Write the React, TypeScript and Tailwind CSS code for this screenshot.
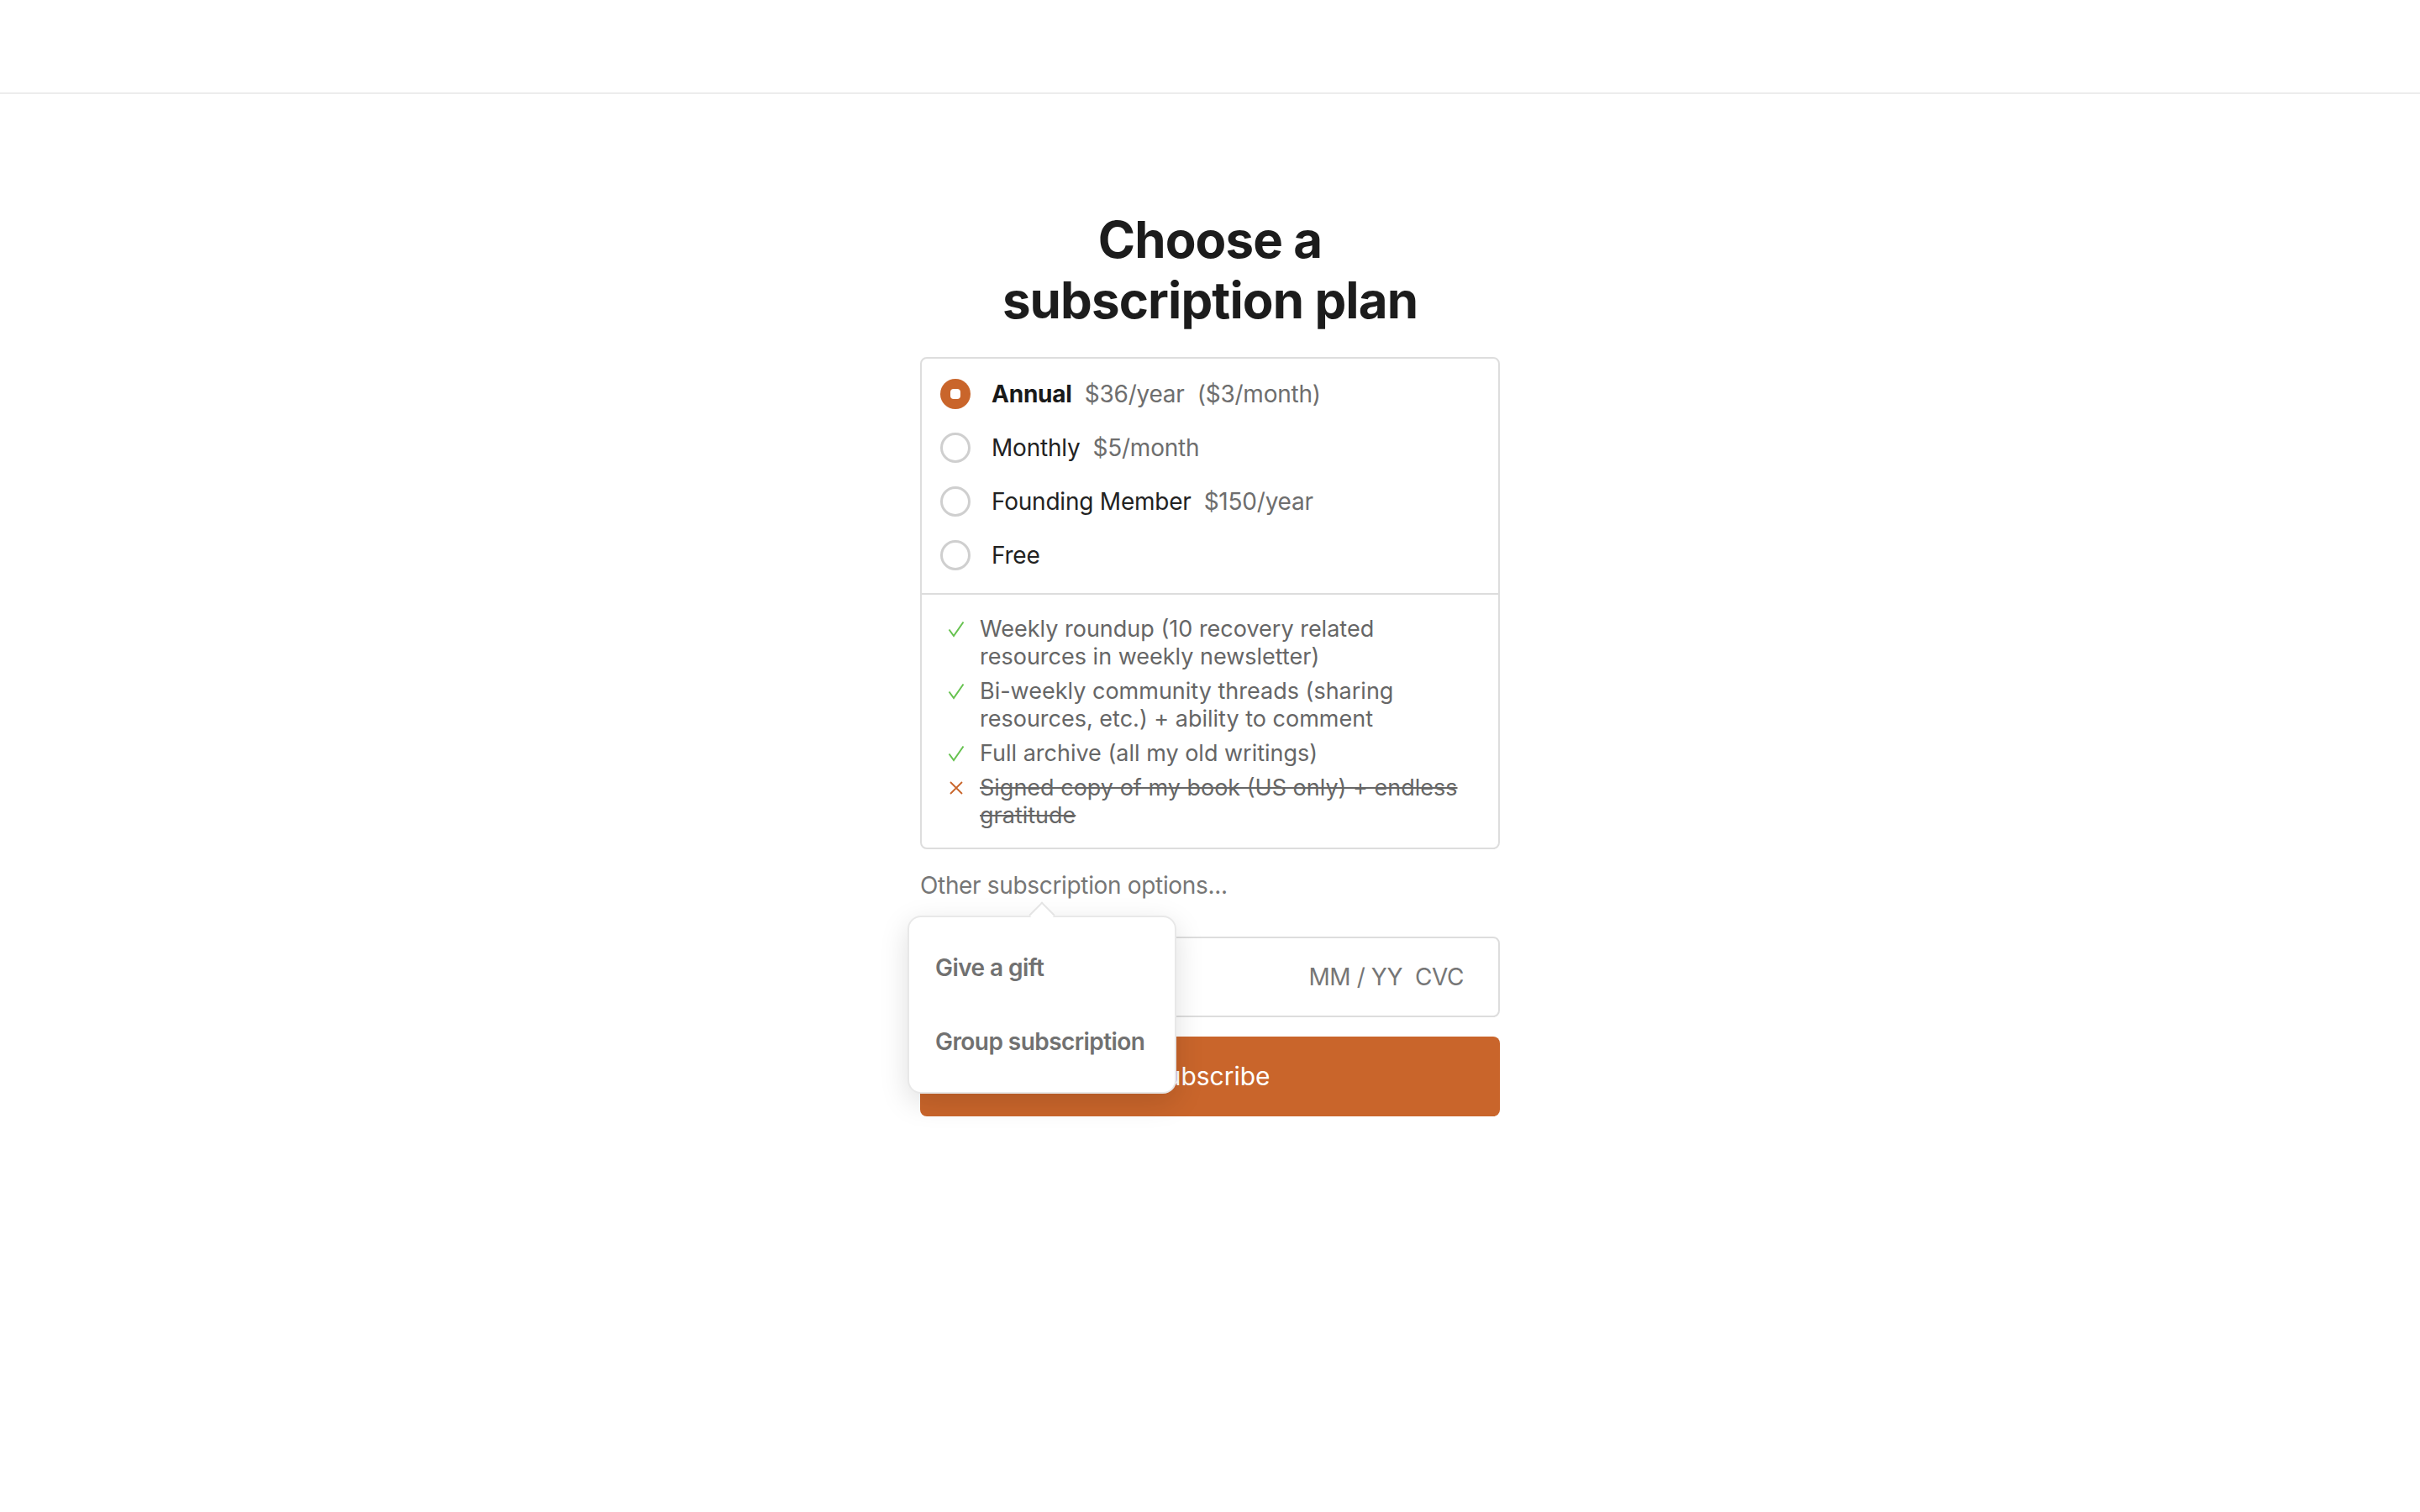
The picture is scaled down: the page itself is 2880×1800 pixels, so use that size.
import React from "react";

function Radio({ selected }: { selected?: boolean }) {
  if (selected) {
    return (
      <div className="w-[36px] h-[36px] rounded-full bg-[#c9652b] flex items-center justify-center shrink-0">
        <div className="w-[12px] h-[12px] rounded-[4px] bg-white" />
      </div>
    );
  }
  return <div className="w-[36px] h-[36px] rounded-full border-[3px] border-[#cfcfcf] bg-white shrink-0" />;
}

function Check() {
  return (
    <svg width="20" height="20" viewBox="0 0 20 20" className="shrink-0">
      <polyline points="1.5,10.5 7,18 18.5,1.5" fill="none" stroke="#66c24f" strokeWidth="2" strokeLinejoin="miter" />
    </svg>
  );
}

function Cross() {
  return (
    <svg width="20" height="20" viewBox="0 0 20 20" className="shrink-0">
      <path d="M3 3 L17 17 M17 3 L3 17" fill="none" stroke="#c9652b" strokeWidth="1.8" />
    </svg>
  );
}

function Feature({ icon, lines, struck }: { icon: React.ReactNode; lines: string[]; struck?: boolean }) {
  return (
    <div className="flex items-start">
      <div className="h-[33px] w-[38px] flex items-center">{icon}</div>
      <div
        className={
          "text-[27px] leading-[33px] text-[#666666] whitespace-nowrap " +
          (struck ? "line-through decoration-[#666666] decoration-2" : "")
        }
      >
        {lines.map((l, i) => (
          <div key={i}>{l}</div>
        ))}
      </div>
    </div>
  );
}

export default function App() {
  return (
    <div className="min-h-screen bg-white font-['Inter','Noto_Sans',sans-serif] text-[#1c1c1c]">
      <header className="h-[112px] border-b-2 border-[#ececec]" />
      <main className="flex flex-col items-center pt-[137px]">
        <h1 className="text-[60px] leading-[72px] font-bold text-center tracking-[-0.015em] text-[#1c1c1c]">
          Choose a
          <br />
          subscription plan
        </h1>

        <div className="w-[690px] mt-[32px]">
          <div className="border-2 border-[#dddddd] rounded-[8px]">
            <div className="pt-[10px] pb-[13px] pl-[22px]">
              {[
                { name: "Annual", prices: ["$36/year", "($3/month)"], selected: true },
                { name: "Monthly", prices: ["$5/month"] },
                { name: "Founding Member", prices: ["$150/year"] },
                { name: "Free", prices: [] },
              ].map((p) => (
                <div key={p.name} className="h-[64px] flex items-center">
                  <Radio selected={p.selected} />
                  <div className="ml-[25px] flex items-center gap-[15px] text-[28px] leading-[34px] tracking-[-0.008em] whitespace-nowrap">
                    <span className={p.selected ? "font-bold text-[#1a1a1a]" : "text-[#222222]"}>{p.name}</span>
                    {p.prices.map((pr) => (
                      <span key={pr} className="text-[#6e6e6e]">
                        {pr}
                      </span>
                    ))}
                  </div>
                </div>
              ))}
            </div>
            <div className="border-t-2 border-[#dddddd] pt-[24px] pb-[22px] pl-[31px] flex flex-col gap-[8px]">
              <Feature icon={<Check />} lines={["Weekly roundup (10 recovery related", "resources in weekly newsletter)"]} />
              <Feature
                icon={<Check />}
                lines={["Bi-weekly community threads (sharing", "resources, etc.) + ability to comment"]}
              />
              <Feature icon={<Check />} lines={["Full archive (all my old writings)"]} />
              <Feature icon={<Cross />} lines={["Signed copy of my book (US only) + endless", "gratitude"]} struck />
            </div>
          </div>

          <div className="relative mt-[27px]">
            <div className="text-[28px] leading-[33px] tracking-[-0.012em] text-[#767676]">Other subscription options...</div>
            <div className="absolute left-[-15px] top-[52px] z-10 w-[320px] bg-white border-2 border-[#e8e8e8] rounded-[16px] shadow-[0_10px_34px_rgba(0,0,0,0.13)] py-[16px]">
              <div className="absolute left-[147px] top-[-14px] w-[22px] h-[22px] rotate-45 bg-white border-l-2 border-t-2 border-[#e4e4e4]" />
              <div className="relative h-[88px] flex items-center px-[31px] text-[28px] font-semibold tracking-[-0.02em] whitespace-nowrap text-[#717171]">
                Give a gift
              </div>
              <div className="relative h-[88px] flex items-center px-[31px] text-[28px] font-semibold tracking-[-0.02em] whitespace-nowrap text-[#717171]">
                Group subscription
              </div>
            </div>
          </div>

          <div className="mt-[44px] h-[96px] border-2 border-[#dddddd] rounded-[8px] flex items-center justify-end pr-[41px] gap-[15px] text-[28px] tracking-[-0.015em] text-[#767676]">
            <span>MM / YY</span>
            <span>CVC</span>
          </div>

          <button className="mt-[23px] w-full h-[95px] rounded-[8px] bg-[#c9652b] text-white text-[30px] flex items-center justify-center">
            Subscribe
          </button>
        </div>
      </main>
    </div>
  );
}
